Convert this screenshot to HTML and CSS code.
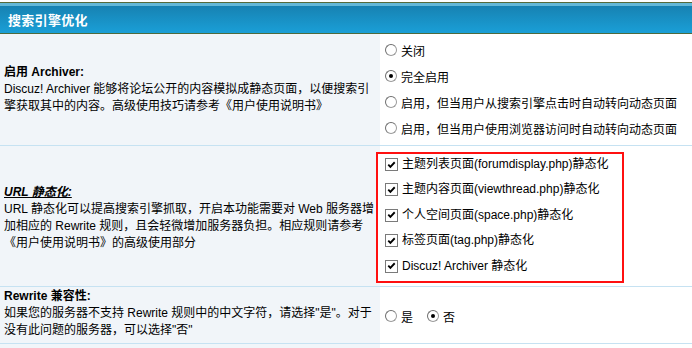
FILE: index.html
```html
<!DOCTYPE html>
<html lang="zh-CN">
<head>
<meta charset="utf-8">
<title>搜索引擎优化</title>
<link rel="stylesheet" href="styles.css">
</head>
<body>
<div class="panel">
  <div class="header"><span class="header-title">搜索引擎优化</span></div>
  <div class="table">
    <div class="row row-archiver">
      <div class="cell-label">
        <div class="label-title">启用 Archiver:</div>
        <div class="label-desc">Discuz! Archiver 能够将论坛公开的内容模拟成静态页面，以便搜索引<br>擎获取其中的内容。高级使用技巧请参考《用户使用说明书》</div>
      </div>
      <div class="cell-value cell-archiver">
        <div class="option"><span class="radio"></span><span>关闭</span></div>
        <div class="option"><span class="radio checked"></span><span>完全启用</span></div>
        <div class="option"><span class="radio"></span><span>启用，但当用户从搜索引擎点击时自动转向动态页面</span></div>
        <div class="option"><span class="radio"></span><span>启用，但当用户使用浏览器访问时自动转向动态页面</span></div>
      </div>
    </div>
    <div class="row row-url">
      <div class="cell-label">
        <div class="label-title label-em">URL 静态化:</div>
        <div class="label-desc">URL 静态化可以提高搜索引擎抓取，开启本功能需要对 Web 服务器增<br>加相应的 Rewrite 规则，且会轻微增加服务器负担。相应规则请参考<br>《用户使用说明书》的高级使用部分</div>
      </div>
      <div class="cell-value cell-url">
        <div class="highlight">
          <div class="check-item"><span class="checkbox"><svg viewBox="0 0 12 12" width="12" height="12"><path d="M2.5 5.5 L4.8 8 L9.5 3" fill="none" stroke="#000" stroke-width="2"/></svg></span><span>主题列表页面(forumdisplay.php)静态化</span></div>
          <div class="check-item"><span class="checkbox"><svg viewBox="0 0 12 12" width="12" height="12"><path d="M2.5 5.5 L4.8 8 L9.5 3" fill="none" stroke="#000" stroke-width="2"/></svg></span><span>主题内容页面(viewthread.php)静态化</span></div>
          <div class="check-item"><span class="checkbox"><svg viewBox="0 0 12 12" width="12" height="12"><path d="M2.5 5.5 L4.8 8 L9.5 3" fill="none" stroke="#000" stroke-width="2"/></svg></span><span>个人空间页面(space.php)静态化</span></div>
          <div class="check-item"><span class="checkbox"><svg viewBox="0 0 12 12" width="12" height="12"><path d="M2.5 5.5 L4.8 8 L9.5 3" fill="none" stroke="#000" stroke-width="2"/></svg></span><span>标签页面(tag.php)静态化</span></div>
          <div class="check-item"><span class="checkbox"><svg viewBox="0 0 12 12" width="12" height="12"><path d="M2.5 5.5 L4.8 8 L9.5 3" fill="none" stroke="#000" stroke-width="2"/></svg></span><span>Discuz! Archiver 静态化</span></div>
        </div>
      </div>
    </div>
    <div class="row row-rewrite">
      <div class="cell-label">
        <div class="label-title">Rewrite 兼容性:</div>
        <div class="label-desc">如果您的服务器不支持 Rewrite 规则中的中文字符，请选择"是"。对于<br>没有此问题的服务器，可以选择"否"</div>
      </div>
      <div class="cell-value cell-rewrite">
        <div class="inline-options">
          <span class="option-inline"><span class="radio"></span><span>是</span></span>
          <span class="option-inline"><span class="radio checked"></span><span>否</span></span>
        </div>
      </div>
    </div>
    <div class="row row-empty">
      <div class="cell-label"></div>
      <div class="cell-value"></div>
    </div>
  </div>
</div>
</body>
</html>
```

FILE: styles.css
```css
html, body {
  margin: 0;
  padding: 0;
  background: #ffffff;
}
body {
  font-family: "Liberation Sans", "Noto Sans CJK SC", sans-serif;
  font-size: 12px;
  color: #000;
  width: 692px;
  height: 348px;
  overflow: hidden;
}
.panel {
  padding-top: 2px;
}
.header {
  height: 30px;
  border-top: 1px solid #566b3b;
  border-bottom: 1px solid #4d6a3e;
  background: linear-gradient(to bottom, #63b8d8 0, #63b8d8 3px, #1782b2 3px, #1a9fd7 100%);
  display: flex;
  align-items: center;
  padding-left: 8px;
  padding-top: 0;
}
.header-title {
  color: #fff;
  font-weight: bold;
  font-size: 13px;
  letter-spacing: 0.3px;
  padding-top: 3px;
}
.table {
  display: grid;
  grid-template-columns: 380px 1fr;
}
.row {
  display: contents;
}
.cell-label {
  background: #f1f5f9;
  border-bottom: 1px solid #c6e2f2;
  padding-left: 4px;
  display: flex;
  flex-direction: column;
  justify-content: center;
  line-height: 17px;
  white-space: nowrap;
}
.cell-value {
  background: #fff;
  border-bottom: 1px solid #c6e2f2;
  padding-left: 5px;
}
.label-title {
  font-weight: bold;
}
.label-em {
  font-style: italic;
  text-decoration: underline;
  align-self: flex-start;
}
.row-url .cell-label {
  padding-top: 4px;
}
.cell-archiver {
  padding-top: 3px;
  padding-bottom: 4px;
}
.option {
  height: 26px;
  display: flex;
  align-items: center;
}
.radio {
  width: 10px;
  height: 10px;
  border-radius: 50%;
  border: 1px solid #9a9a9a;
  border-top-color: #6e6e6e;
  border-left-color: #6e6e6e;
  background: #fff;
  margin-right: 4px;
  flex: none;
  position: relative;
  box-sizing: content-box;
}
.radio.checked::after {
  content: "";
  position: absolute;
  left: 3px;
  top: 3px;
  width: 4px;
  height: 4px;
  border-radius: 50%;
  background: #000;
}
.cell-url {
  padding-top: 6px;
  padding-bottom: 3px;
}
.highlight {
  margin-left: -9px;
  width: 237px;
  height: 127px;
  border: 2px solid #ff1010;
  background: #fff;
  padding-left: 7px;
  position: relative;
}
.check-item {
  height: 25.4px;
  line-height: 20px;
  display: flex;
  align-items: flex-start;
  white-space: nowrap;
}
.checkbox {
  width: 11px;
  height: 11px;
  border: 1px solid #7a7a7a;
  background: #fff;
  margin-top: 4px;
  margin-right: 4px;
  display: flex;
  align-items: center;
  justify-content: center;
  flex: none;
}
.checkbox svg {
  display: block;
}
.row-rewrite .cell-label {
  padding-top: 1px;
  padding-bottom: 4px;
}
.cell-rewrite {
  display: flex;
  align-items: center;
  padding-top: 2px;
}
.inline-options {
  display: flex;
  gap: 14px;
}
.option-inline {
  display: flex;
  align-items: center;
}
.row-empty .cell-label,
.row-empty .cell-value {
  height: 20px;
  border-bottom: none;
}
```
